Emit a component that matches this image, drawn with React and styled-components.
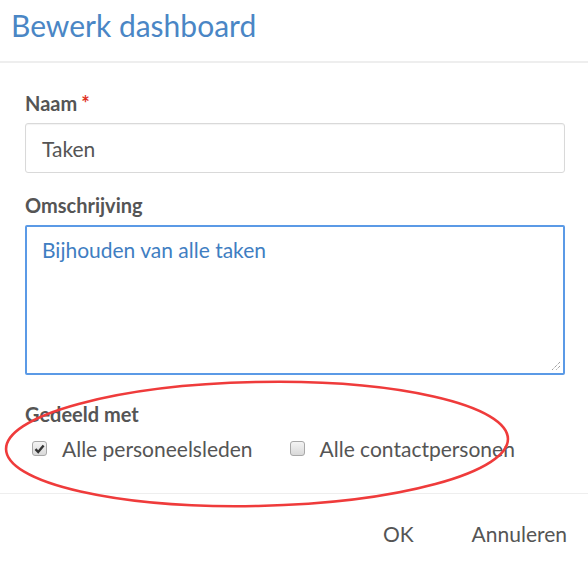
import React from 'react';
import styled, { createGlobalStyle } from 'styled-components';

const GlobalStyle = createGlobalStyle`
  html, body {
    margin: 0;
    padding: 0;
    background: #fff;
  }
  body {
    font-family: Lato, "Open Sans", sans-serif;
    color: #555;
  }
`;

const Dialog = styled.div`
  position: relative;
  width: 588px;
  height: 566px;
  overflow: hidden;
  background: #fff;
`;

const Header = styled.div`
  height: 63px;
  padding: 0 11px;
  display: flex;
  align-items: center;
  border-bottom: 2px solid #eeeeee;
  box-sizing: border-box;
`;

const Title = styled.h1`
  margin: 0 0 12px;
  font-size: 30px;
  font-weight: 400;
  color: #4a86c5;
`;

const Body = styled.div`
  padding: 27px 23px 0 25px;
  display: flex;
  flex-direction: column;
`;

const Field = styled.div`
  display: flex;
  flex-direction: column;
  margin-bottom: ${p => p.$gap || 0}px;
`;

const Label = styled.label`
  font-size: 20px;
  font-weight: 700;
  line-height: 26px;
  color: #555;
  margin-bottom: 7px;
`;

const Required = styled.span`
  color: #e0301e;
  margin-left: 4px;
`;

const Input = styled.div`
  height: 50px;
  box-sizing: border-box;
  border: 1.5px solid #d9d9d9;
  border-radius: 3px;
  box-shadow: inset 0 1px 1px rgba(0, 0, 0, 0.05);
  padding: 0 16px;
  display: flex;
  align-items: center;
  font-size: 21px;
  color: #555;
`;

const TextArea = styled.div`
  position: relative;
  height: 150px;
  box-sizing: border-box;
  border: 2px solid #5b9ae6;
  border-radius: 2px;
  padding: 9px 15px;
  font-size: 21px;
  line-height: 28px;
  color: #3f7ec2;
`;

const Grip = styled.svg`
  position: absolute;
  right: 2px;
  bottom: 2px;
`;

const CheckRow = styled.div`
  display: flex;
  align-items: center;
  margin-top: 2px;
  padding-left: 7px;
`;

const CheckItem = styled.label`
  display: flex;
  align-items: center;
  font-size: 21px;
  color: #555;
  margin-right: 37px;
`;

const Box = styled.span`
  width: 15px;
  height: 15px;
  box-sizing: border-box;
  border: 1px solid #a8a8a8;
  border-radius: 3px;
  background: linear-gradient(#f4f4f4, #d9d9d9);
  display: inline-flex;
  align-items: center;
  justify-content: center;
  margin-right: 15px;
`;

const Footer = styled.div`
  position: absolute;
  left: 0;
  right: 0;
  top: 493px;
  border-top: 1px solid #eeeeee;
  display: flex;
  justify-content: flex-end;
  gap: 18px;
  padding: 21px 1px 0 0;
`;

const FooterButton = styled.button`
  background: none;
  border: none;
  font-family: Lato, sans-serif;
  font-size: 21px;
  color: #555;
  padding: 6px 20px;
  cursor: pointer;
`;

const Ellipse = styled.svg`
  position: absolute;
  left: 0;
  top: 0;
  pointer-events: none;
`;

const Checkbox = ({ checked, children }) => (
  <CheckItem>
    <Box>
      {checked && (
        <svg width="11" height="10" viewBox="0 0 11 10">
          <path d="M1.5 5.2 L4.2 8 L9.6 1.6" fill="none" stroke="#333" strokeWidth="2.4" />
        </svg>
      )}
    </Box>
    {children}
  </CheckItem>
);

export default function App() {
  return (
    <Dialog>
      <GlobalStyle />
      <Header>
        <Title>Bewerk dashboard</Title>
      </Header>
      <Body>
        <Field $gap={19}>
          <Label>
            Naam<Required>*</Required>
          </Label>
          <Input>Taken</Input>
        </Field>
        <Field $gap={26}>
          <Label>Omschrijving</Label>
          <TextArea>
            Bijhouden van alle taken
            <Grip width="12" height="12" viewBox="0 0 12 12">
              <path d="M11 3 L3 11 M11 7 L7 11" stroke="#777" strokeWidth="1" strokeDasharray="1 1" />
            </Grip>
          </TextArea>
        </Field>
        <Field>
          <Label>Gedeeld met</Label>
          <CheckRow>
            <Checkbox checked>Alle personeelsleden</Checkbox>
            <Checkbox>Alle contactpersonen</Checkbox>
          </CheckRow>
        </Field>
      </Body>
      <Footer>
        <FooterButton>OK</FooterButton>
        <FooterButton>Annuleren</FooterButton>
      </Footer>
      <Ellipse width="588" height="566">
        <ellipse
          cx="257"
          cy="444"
          rx="251"
          ry="62"
          transform="rotate(-1.2 257 444)"
          fill="none"
          stroke="#ef3b3b"
          strokeWidth="2.6"
        />
      </Ellipse>
    </Dialog>
  );
}
